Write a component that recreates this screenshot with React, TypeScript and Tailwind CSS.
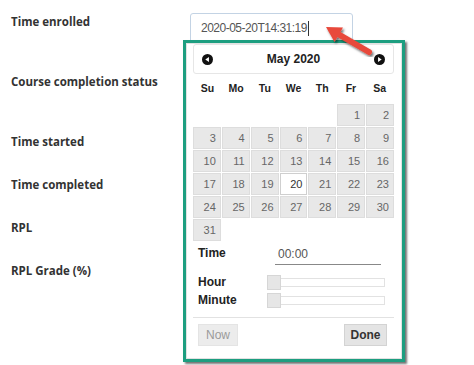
import React from "react";

const labels: { text: string; h: string }[] = [
  { text: "Time enrolled", h: "h-[60px]" },
  { text: "Course completion status", h: "h-[60px]" },
  { text: "Time started", h: "h-[43px]" },
  { text: "Time completed", h: "h-[43px]" },
  { text: "RPL", h: "h-[43px]" },
  { text: "RPL Grade (%)", h: "h-[43px]" },
];

const days = ["Su", "Mo", "Tu", "We", "Th", "Fr", "Sa"];

function NavIcon({ dir }: { dir: "prev" | "next" }) {
  return (
    <svg width="11" height="11" viewBox="0 0 12 12">
      <circle cx="6" cy="6" r="6" fill="#111" />
      {dir === "prev" ? (
        <polygon points="7.6,3.2 7.6,8.8 3.6,6" fill="#fff" />
      ) : (
        <polygon points="4.4,3.2 4.4,8.8 8.4,6" fill="#fff" />
      )}
    </svg>
  );
}

export default function App() {
  const cells: (number | null)[] = [null, null, null, null, null];
  for (let d = 1; d <= 31; d++) cells.push(d);
  while (cells.length < 42) cells.push(null);
  const rows: (number | null)[][] = [];
  for (let i = 0; i < 42; i += 7) rows.push(cells.slice(i, i + 7));

  return (
    <div className="relative w-[474px] h-[365px] bg-white overflow-hidden">
      <div className="flex pt-[13px]">
        <div className="w-[190px] pl-[11px] flex flex-col">
          {labels.map((l) => (
            <div key={l.text} className={l.h}>
              <div
                className="text-[11.5px] leading-[18px] font-bold text-[#333]"
                style={{ fontFamily: '"Open Sans", sans-serif' }}
              >
                {l.text}
              </div>
            </div>
          ))}
        </div>
        <div className="relative">
          <div
            className="w-[163px] h-[30px] border border-[#c3d3e4] rounded-[3px] flex items-center pl-[10px] text-[12px] tracking-[-0.5px] text-[#555]"
            style={{ fontFamily: '"Liberation Sans", Arial, sans-serif' }}
          >
            <span>2020-05-20T14:31:19</span>
            <span className="w-px h-[15px] bg-[#333] ml-[1px]" />
          </div>
          <div
            className="absolute top-[27px] left-[-7px] w-[222px] h-[322px] border-[3px] border-[#1d9e80] bg-white shadow-[2px_2px_2px_rgba(0,0,0,0.55)]"
            style={{ fontFamily: '"Liberation Sans", Arial, sans-serif' }}
          >
            <div className="h-full border border-[#e2e2e2] pl-[6px] pr-[7px] flex flex-col">
              <div className="h-[30px] border border-[#e6e6e6] rounded-[3px] flex items-center justify-between px-[8px]">
                <NavIcon dir="prev" />
                <span className="text-[12px] font-bold text-[#222]">May 2020</span>
                <NavIcon dir="next" />
              </div>
              <div className="grid grid-cols-7 h-[30px] items-center">
                {days.map((d) => (
                  <div key={d} className="text-center text-[10.5px] font-bold text-[#222]">
                    {d}
                  </div>
                ))}
              </div>
              <div className="flex flex-col gap-[1px]">
                {rows.map((r, ri) => (
                  <div key={ri} className="grid grid-cols-7 gap-[1px] h-[22px]">
                    {r.map((c, ci) =>
                      c === null ? (
                        <div key={ci} />
                      ) : (
                        <div
                          key={ci}
                          className={
                            c === 20
                              ? "bg-white border border-[#cfcfcf] text-[#333] text-[11px] flex items-center justify-end pr-[4px]"
                              : "bg-[#e8e8e8] border border-[#dddddd] text-[#666] text-[11px] flex items-center justify-end pr-[4px]"
                          }
                        >
                          {c}
                        </div>
                      )
                    )}
                  </div>
                ))}
              </div>
              <div className="flex items-center h-[24px] pl-[5px]">
                <span className="w-[77px] text-[12px] font-bold text-[#222]">Time</span>
                <div className="w-[106px] h-[22px] border-b border-[#888] flex items-center pl-[3px] text-[12px] text-[#555] mt-[2px]">
                  00:00
                </div>
              </div>
              <div className="flex items-center h-[18px] mt-[8px] pl-[5px]">
                <span className="w-[69px] text-[12px] font-bold text-[#222]">Hour</span>
                <div className="relative w-[118px] h-[9px] border border-[#e2e2e2] bg-white">
                  <div className="absolute left-[-1px] top-[-4px] w-[14px] h-[15px] bg-[#e6e6e6] border border-[#d6d6d6]" />
                </div>
              </div>
              <div className="flex items-center h-[18px] pl-[5px]">
                <span className="w-[69px] text-[12px] font-bold text-[#222]">Minute</span>
                <div className="relative w-[118px] h-[9px] border border-[#e2e2e2] bg-white">
                  <div className="absolute left-[-1px] top-[-4px] w-[14px] h-[15px] bg-[#e6e6e6] border border-[#d6d6d6]" />
                </div>
              </div>
              <div className="mt-[8px] border-t border-[#e2e2e2] flex justify-between pt-[6px] pl-[5px] pr-[7px]">
                <div className="w-[40px] h-[22px] bg-[#ececec] border border-[#e4e4e4] flex items-center justify-center text-[12px] text-[#9a9a9a]">
                  Now
                </div>
                <div className="w-[43px] h-[22px] bg-[#e4e4e4] border border-[#d3d3d3] flex items-center justify-center text-[12px] font-bold text-[#333]">
                  Done
                </div>
              </div>
            </div>
          </div>
        </div>
      </div>
      <svg className="absolute left-0 top-0 pointer-events-none" width="474" height="365" viewBox="0 0 474 365">
        <defs>
          <filter id="sh" x="-20%" y="-20%" width="140%" height="140%">
            <feDropShadow dx="1.5" dy="2" stdDeviation="1" floodColor="#000" floodOpacity="0.55" />
          </filter>
        </defs>
        <g filter="url(#sh)">
          <line x1="338" y1="34" x2="369" y2="52" stroke="#e8493b" strokeWidth="6" strokeLinecap="round" />
          <polygon points="326,27 343,27.5 334.5,42" fill="#e8493b" />
        </g>
      </svg>
    </div>
  );
}
